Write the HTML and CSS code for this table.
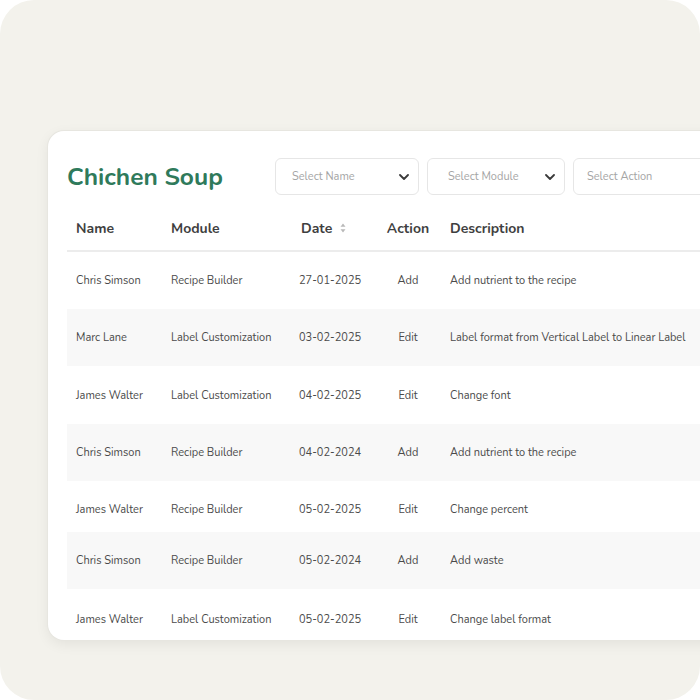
FILE: index.html
```html
<!DOCTYPE html>
<html>
<head>
<meta charset="utf-8">
<link rel="stylesheet" href="styles.css">
</head>
<body>
<div class="frame">
  <div class="card">
    <div class="topbar">
      <h1 class="title">Chichen Soup</h1>
      <div class="filters">
        <div class="select s1"><span>Select Name</span><svg class="chev" width="10" height="6" viewBox="0 0 10 6"><path d="M1 1l4 4 4-4" fill="none" stroke="#3a3a3a" stroke-width="1.8" stroke-linecap="round" stroke-linejoin="round"/></svg></div>
        <div class="select s2"><span>Select Module</span><svg class="chev" width="10" height="6" viewBox="0 0 10 6"><path d="M1 1l4 4 4-4" fill="none" stroke="#3a3a3a" stroke-width="1.8" stroke-linecap="round" stroke-linejoin="round"/></svg></div>
        <div class="select s3"><span>Select Action</span></div>
      </div>
    </div>
    <div class="table">
      <div class="row head">
        <div class="c name">Name</div>
        <div class="c module">Module</div>
        <div class="c date">Date <svg class="sort" width="6" height="10" viewBox="0 0 6 10"><path d="M3 0.5L5.5 3.8H0.5Z M3 9.5L5.5 6.2H0.5Z" fill="#b9b9b9"/></svg></div>
        <div class="c action">Action</div>
        <div class="c desc">Description</div>
      </div>
      <div class="row r1">
        <div class="c name">Chris Simson</div><div class="c module">Recipe Builder</div><div class="c date">27-01-2025</div><div class="c action">Add</div><div class="c desc">Add nutrient to the recipe</div>
      </div>
      <div class="row r2 alt">
        <div class="c name">Marc Lane</div><div class="c module">Label Customization</div><div class="c date">03-02-2025</div><div class="c action">Edit</div><div class="c desc">Label format from Vertical Label to Linear Label</div>
      </div>
      <div class="row r3">
        <div class="c name">James Walter</div><div class="c module">Label Customization</div><div class="c date">04-02-2025</div><div class="c action">Edit</div><div class="c desc">Change font</div>
      </div>
      <div class="row r4 alt">
        <div class="c name">Chris Simson</div><div class="c module">Recipe Builder</div><div class="c date">04-02-2024</div><div class="c action">Add</div><div class="c desc">Add nutrient to the recipe</div>
      </div>
      <div class="row r5">
        <div class="c name">James Walter</div><div class="c module">Recipe Builder</div><div class="c date">05-02-2025</div><div class="c action">Edit</div><div class="c desc">Change percent</div>
      </div>
      <div class="row r6 alt">
        <div class="c name">Chris Simson</div><div class="c module">Recipe Builder</div><div class="c date">05-02-2024</div><div class="c action">Add</div><div class="c desc">Add waste</div>
      </div>
      <div class="row r7">
        <div class="c name">James Walter</div><div class="c module">Label Customization</div><div class="c date">05-02-2025</div><div class="c action">Edit</div><div class="c desc">Change label format</div>
      </div>
    </div>
  </div>
</div>
</body>
</html>
```
FILE: styles.css
```css
html, body {
  margin: 0;
  padding: 0;
  background: #ffffff;
}
body {
  font-family: "Nunito", "Lato", "Open Sans", sans-serif;
}
.frame {
  width: 700px;
  height: 700px;
  background: #f3f2ec;
  border-radius: 34px;
  overflow: hidden;
  box-sizing: border-box;
  padding-top: 131px;
  padding-left: 48px;
}
.card {
  width: 700px;
  height: 509px;
  background: #ffffff;
  border-radius: 16px 0 0 16px;
  box-shadow: 0 0 0 1px #e7e6e0, 0 4px 14px rgba(0, 0, 0, 0.07);
  box-sizing: border-box;
  padding-left: 19px;
  padding-top: 27px;
  overflow: hidden;
}
.topbar {
  display: flex;
  align-items: center;
  height: 37px;
}
.title {
  margin: 0;
  flex: 0 0 208px;
  font-size: 24.5px;
  font-weight: 700;
  color: #2f7a5b;
}
.filters {
  display: flex;
  gap: 8px;
}
.select {
  height: 37px;
  box-sizing: border-box;
  border: 1px solid #e6e6e6;
  border-radius: 6px;
  display: flex;
  align-items: center;
  justify-content: space-between;
  padding: 0 9px 0 16px;
  font-size: 11px;
  color: #a5a5a5;
}
.s1 { width: 144px; }
.s2 { width: 138px; padding-left: 20px; }
.s3 { width: 160px; padding-left: 13px; }
.chev { display: block; }
.table {
  margin-top: 10px;
}
.row {
  display: grid;
  grid-template-columns: 95px 128px 88px 60px 1fr;
  align-items: center;
  font-size: 11px;
  color: #4a4a4a;
}
.row.head {
  height: 47px;
  padding-top: 1px;
  border-bottom: 2px solid #ececec;
  font-size: 14px;
  font-weight: 700;
  color: #3f3f3f;
  box-sizing: border-box;
}
.c { padding-left: 9px; white-space: nowrap; }
.c.action { padding-left: 0; text-align: center; }
.c.desc { padding-left: 12px; }
.c.date { padding-left: 9px; }
.head .c.date { padding-left: 11px; display: flex; align-items: center; gap: 8px; }
.sort { display: block; }
.alt { background: #f8f8f8; }
.r1 { height: 57px; }
.r2 { height: 57px; }
.r3 { height: 58px; }
.r4 { height: 57px; }
.r5 { height: 51px; padding-top: 6px; box-sizing: border-box; }
.r6 { height: 57px; }
.r7 { height: 51px; padding-top: 9px; box-sizing: border-box; }
```
